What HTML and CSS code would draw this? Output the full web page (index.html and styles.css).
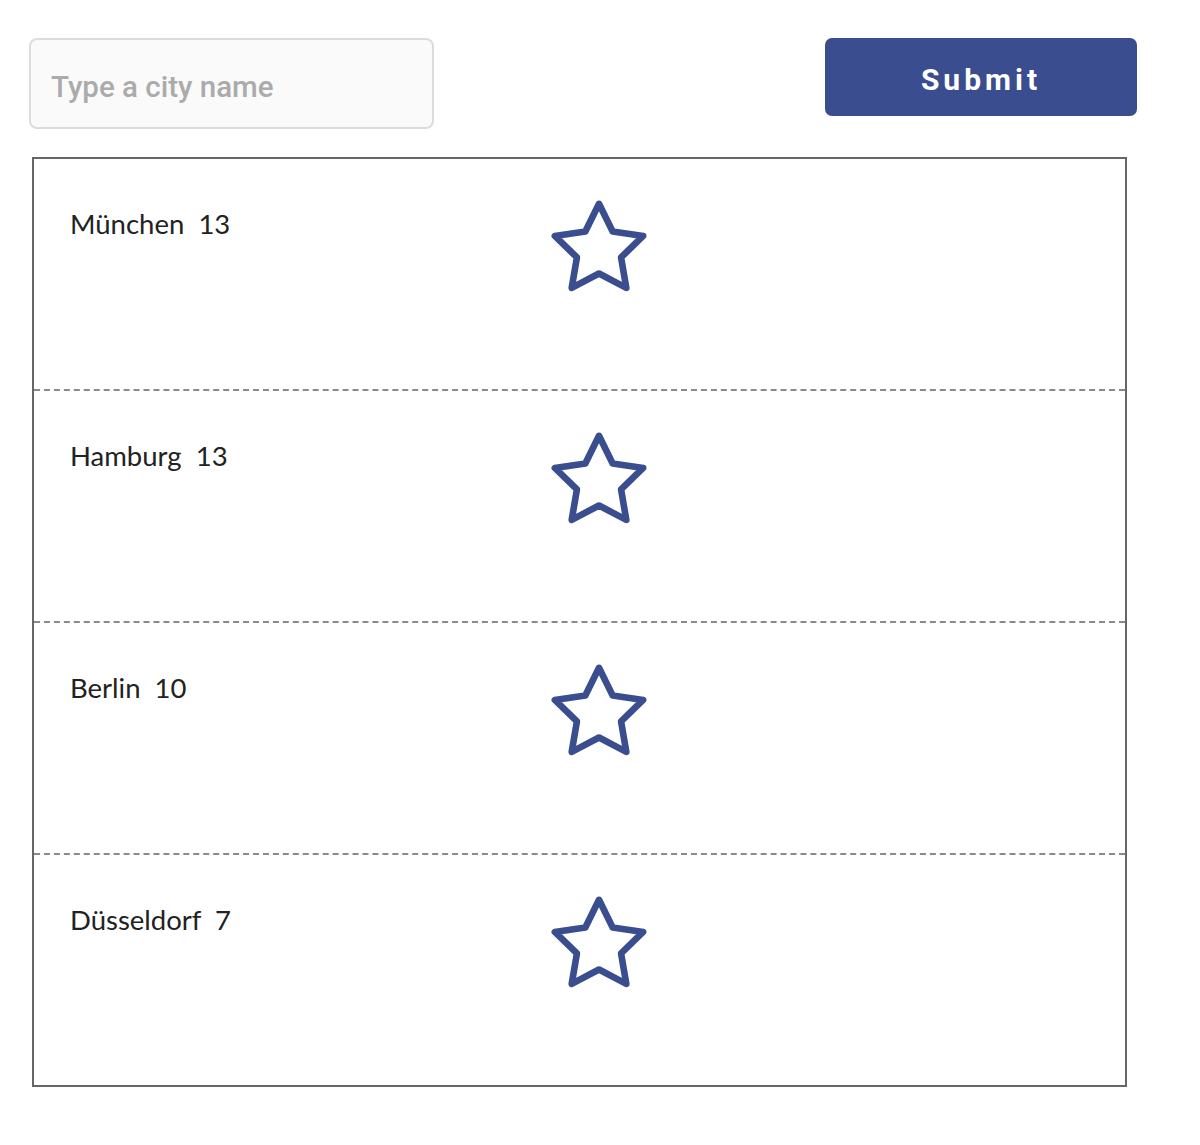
FILE: index.html
```html
<!DOCTYPE html>
<html>
<head>
<meta charset="utf-8">
<link rel="stylesheet" href="styles.css">
</head>
<body>
<div class="page">
  <form class="search">
    <input class="city-input" type="text" placeholder="Type a city name">
    <button class="submit" type="button">Submit</button>
  </form>
  <ul class="list">
    <li class="row">
      <span class="city">München&nbsp;&nbsp;13</span>
      <svg class="star" viewBox="0 0 24 24"><polygon points="12 2 15.09 8.26 22 9.27 17 14.14 18.18 21.02 12 17.77 5.82 21.02 7 14.14 2 9.27 8.91 8.26"/></svg>
    </li>
    <li class="row">
      <span class="city">Hamburg&nbsp;&nbsp;13</span>
      <svg class="star" viewBox="0 0 24 24"><polygon points="12 2 15.09 8.26 22 9.27 17 14.14 18.18 21.02 12 17.77 5.82 21.02 7 14.14 2 9.27 8.91 8.26"/></svg>
    </li>
    <li class="row">
      <span class="city">Berlin&nbsp;&nbsp;10</span>
      <svg class="star" viewBox="0 0 24 24"><polygon points="12 2 15.09 8.26 22 9.27 17 14.14 18.18 21.02 12 17.77 5.82 21.02 7 14.14 2 9.27 8.91 8.26"/></svg>
    </li>
    <li class="row">
      <span class="city">Düsseldorf&nbsp;&nbsp;7</span>
      <svg class="star" viewBox="0 0 24 24"><polygon points="12 2 15.09 8.26 22 9.27 17 14.14 18.18 21.02 12 17.77 5.82 21.02 7 14.14 2 9.27 8.91 8.26"/></svg>
    </li>
  </ul>
</div>
</body>
</html>
```

FILE: styles.css
```css
* { box-sizing: border-box; }
html, body { margin: 0; padding: 0; background: #fff; }
.page {
  padding: 38px 0 0 29px;
  width: 1137px;
}
.search {
  display: flex;
  justify-content: space-between;
  align-items: flex-start;
  margin: 0;
}
.city-input {
  width: 405px;
  height: 91px;
  border: 2px solid #dcdcdc;
  border-radius: 8px;
  background: #fafafa;
  padding: 6px 20px 0 20px;
  font-family: Roboto, "Noto Sans", sans-serif;
  font-weight: 500;
  font-size: 29.5px;
  color: #333;
  outline: none;
}
.city-input::placeholder { color: #ababab; }
.submit {
  width: 312px;
  height: 78px;
  border: none;
  border-radius: 7px;
  background: #3a4d8f;
  color: #fff;
  font-family: Roboto, "Noto Sans", sans-serif;
  font-weight: 700;
  font-size: 30px;
  letter-spacing: 4px;
  padding: 4px 0 0 0;
}
.list {
  list-style: none;
  margin: 28px 0 0 3px;
  padding: 0;
  width: 1095px;
  border: 2px solid #666;
}
.row {
  display: flex;
  align-items: flex-start;
  height: 232px;
  border-top: 2px dashed #8a8a8a;
}
.row:first-child { height: 230px; border-top: none; }
.city {
  width: 512px;
  padding: 49px 0 0 36px;
  font-family: Lato, sans-serif;
  font-size: 27.5px;
  line-height: 32px;
  color: #222;
}
.star {
  width: 106px;
  height: 106px;
  margin-top: 36px;
  fill: none;
  stroke: #3a4d8f;
  stroke-width: 1.5;
  stroke-linejoin: round;
}
```
